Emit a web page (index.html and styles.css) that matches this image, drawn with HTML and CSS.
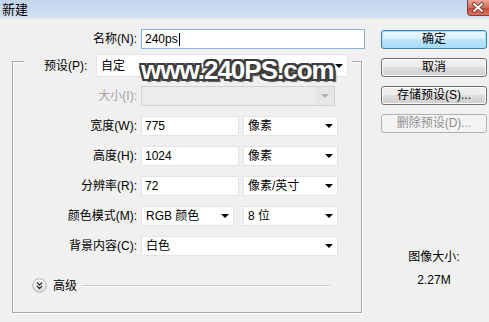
FILE: index.html
```html
<!DOCTYPE html>
<html lang="zh">
<head>
<meta charset="utf-8">
<title>新建</title>
<link rel="stylesheet" href="styles.css">
</head>
<body>
<div class="titlebar">
  <span class="title">新建</span>
  <div class="close">
    <svg width="22" height="16" viewBox="0 0 22 16">
      <path d="M7 4 L15 11 M15 4 L7 11" stroke="#5a2a22" stroke-width="3.6" stroke-linecap="round"/>
      <path d="M7 4 L15 11 M15 4 L7 11" stroke="#fff" stroke-width="2" stroke-linecap="round"/>
    </svg>
  </div>
</div>
<div class="content">
  <div class="main">
    <div class="name-row">
      <span class="lbl name-lbl">名称(N):</span>
      <div class="field name-field">240ps<span class="caret"></span></div>
    </div>
    <div class="group">
      <div class="group-head">
        <span class="head-lbl">预设(P):</span>
        <div class="field select preset">自定<span class="arrow"></span></div>
      </div>
      <div class="rows">
        <div class="row">
          <span class="lbl disabled-text">大小(I):</span>
          <div class="field select size-sel disabled"><span class="drop-btn"><span class="arrow gray"></span></span></div>
        </div>
        <div class="row">
          <span class="lbl">宽度(W):</span>
          <div class="field num">775</div>
          <div class="field select unit">像素<span class="arrow"></span></div>
        </div>
        <div class="row">
          <span class="lbl">高度(H):</span>
          <div class="field num">1024</div>
          <div class="field select unit">像素<span class="arrow"></span></div>
        </div>
        <div class="row">
          <span class="lbl">分辨率(R):</span>
          <div class="field num">72</div>
          <div class="field select unit">像素/英寸<span class="arrow"></span></div>
        </div>
        <div class="row">
          <span class="lbl">颜色模式(M):</span>
          <div class="field select mode">RGB 颜色<span class="arrow"></span></div>
          <div class="field select bits">8 位<span class="arrow"></span></div>
        </div>
        <div class="row">
          <span class="lbl">背景内容(C):</span>
          <div class="field select bg">白色<span class="arrow"></span></div>
        </div>
      </div>
      <div class="advanced">
        <span class="adv-icon">
          <svg width="15" height="15" viewBox="0 0 15 15">
            <defs>
              <linearGradient id="g" x1="0" y1="0" x2="0" y2="1">
                <stop offset="0" stop-color="#ffffff"/>
                <stop offset="1" stop-color="#dcdcdc"/>
              </linearGradient>
            </defs>
            <circle cx="7.5" cy="7.5" r="6.8" fill="url(#g)" stroke="#b4b4b4"/>
            <path d="M5 4.5 L7.5 7 L10 4.5 M5 8 L7.5 10.5 L10 8" fill="none" stroke="#333" stroke-width="1.3"/>
          </svg>
        </span>
        <span class="adv-text">高级</span>
        <span class="adv-line"></span>
      </div>
    </div>
  </div>
  <div class="side">
    <div class="btn default">确定</div>
    <div class="btn">取消</div>
    <div class="btn">存储预设(S)...</div>
    <div class="btn disabled-btn">删除预设(D)...</div>
    <div class="info">
      <div>图像大小:</div>
      <div class="info-val">2.27M</div>
    </div>
  </div>
</div>
<div class="watermark">www.240PS.com</div>
</body>
</html>
```

FILE: styles.css
```css
* { box-sizing: border-box; }
html, body { margin: 0; padding: 0; }
body {
  width: 489px;
  height: 322px;
  overflow: hidden;
  position: relative;
  background: #f0f0f0;
  color: #000;
  font-family: "Liberation Sans", "Noto Sans CJK SC", sans-serif;
  font-size: 12px;
  line-height: 14px;
}

.titlebar {
  height: 19px;
  display: flex;
  justify-content: space-between;
  align-items: flex-start;
  background: linear-gradient(#c2d5ec, #d4e2f2);
  border-bottom: 1px solid #dfe8f2;
}
.title {
  padding: 2px 0 0 2px;
  font-size: 13px;
  line-height: 15px;
}
.close {
  width: 22px;
  height: 16px;
  border: 1px solid #8a3a30;
  border-top: none;
  border-right: none;
  border-radius: 0 0 0 4px;
  background: linear-gradient(#e9a99b, #d46a58 50%, #c24a38 51%, #d9745e);
  display: flex;
}
.close svg { display: block; margin-left: -1px; }

.content {
  display: flex;
  padding-top: 10px;
}
.main { width: 365px; }

.name-row {
  display: flex;
  align-items: center;
  height: 20px;
}
.lbl {
  text-align: right;
  white-space: nowrap;
  flex: none;
}
.name-lbl { width: 137px; margin-right: 4px; }

.field {
  height: 20px;
  background: #fff;
  border: 1px solid #e4e4e8;
  display: flex;
  align-items: center;
  padding-left: 3px;
  position: relative;
  flex: none;
  white-space: nowrap;
}
.name-field {
  width: 224px;
  border-color: #82b5e3;
}
.caret {
  display: inline-block;
  width: 1px;
  height: 13px;
  background: #000;
  margin-left: 1px;
}

.group {
  margin: 12px 0 0 12px;
  width: 350px;
  height: 252px;
  border: 1px solid #a8a8a8;
  box-shadow: inset 1px 1px 0 #fff, 1px 1px 0 #fff;
}
.group-head {
  margin: -8px 0 0 11px;
  width: 328px;
  height: 23px;
  background: #f0f0f0;
  display: flex;
  align-items: center;
  padding-left: 20px;
}
.head-lbl { width: 52px; white-space: nowrap; }
.preset {
  width: 252px;
  height: 23px;
  padding-left: 6px;
}

.rows {
  display: flex;
  flex-direction: column;
  gap: 10px;
  margin-top: 9px;
}
.row {
  display: flex;
  align-items: center;
  height: 20px;
}
.row .lbl { width: 124px; margin-right: 4px; }

.select { padding-left: 4px; }
.arrow {
  position: absolute;
  right: 4px;
  top: 50%;
  margin-top: -2px;
  width: 0;
  height: 0;
  border-left: 4px solid transparent;
  border-right: 4px solid transparent;
  border-top: 4px solid #000;
}
.arrow.gray { border-top-color: #b0b0b0; right: 5px; }

.disabled-text { color: #a3a3a3; }
.size-sel {
  width: 194px;
  background: #ececec;
  border-color: #d2d2d2;
  justify-content: flex-end;
  padding: 0;
}
.drop-btn {
  width: 18px;
  height: 18px;
  background: #e6e6e6;
  position: relative;
}

.num { width: 98px; }
.unit { width: 95px; margin-left: 4px; }
.mode { width: 93px; }
.bits { width: 95px; margin-left: 9px; }
.bg { width: 197px; }

.advanced {
  display: flex;
  align-items: center;
  margin-top: 22px;
  padding-left: 19px;
  height: 15px;
}
.adv-icon { display: flex; width: 15px; height: 15px; }
.adv-text { margin-left: 6px; }
.adv-line {
  margin-left: 5px;
  width: 248px;
  height: 2px;
  border-top: 1px solid #c8c8c8;
  border-bottom: 1px solid #fff;
}

.side {
  margin-left: 16px;
  width: 106px;
  padding-top: 1px;
  display: flex;
  flex-direction: column;
  gap: 9px;
}
.btn {
  height: 19px;
  border: 1px solid #707070;
  border-radius: 3px;
  background: linear-gradient(#f2f2f2, #ebebeb 45%, #dddddd 50%, #cfcfcf);
  box-shadow: inset 0 0 0 1px #fcfcfc;
  text-align: center;
  line-height: 17px;
  white-space: nowrap;
}
.btn.default {
  border-color: #3c7fb1;
  background: linear-gradient(#eaf6fd, #d9f0fc 45%, #bee6fd 50%, #a7d9f5);
  box-shadow: inset 0 0 0 1px #9ee0fb;
}
.btn.disabled-btn {
  border-color: #adb2b5;
  background: #f4f4f4;
  box-shadow: none;
  color: #8f8f8f;
}
.info {
  margin-top: 108px;
  text-align: center;
  line-height: 14px;
}
.info-val { margin-top: 9px; }

.watermark {
  position: absolute;
  left: 141px;
  top: 55px;
  font-family: "Liberation Sans", sans-serif;
  font-weight: bold;
  font-size: 26px;
  line-height: 30px;
  letter-spacing: -1px;
  color: #fff;
  text-shadow:
    -2px -2px 0 #3d3d3d, 2px -2px 0 #3d3d3d, -2px 2px 0 #3d3d3d, 2px 2px 0 #3d3d3d,
    0 -2px 0 #3d3d3d, 0 2px 0 #3d3d3d, -2px 0 0 #3d3d3d, 2px 0 0 #3d3d3d,
    3px 3px 1px #555;
}
```
